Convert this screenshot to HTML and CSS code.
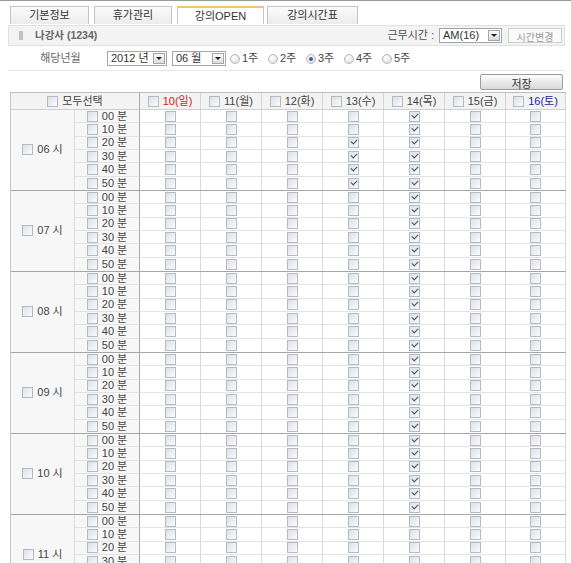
FILE: index.html
```html
<!DOCTYPE html>
<html lang="ko">
<head>
<meta charset="utf-8">
<title>강의OPEN</title>
<link rel="stylesheet" href="styles.css">
</head>
<body>
<div class="topline"></div>
<nav class="tabs">
  <a class="tab t1">기본정보</a>
  <a class="tab t2">휴가관리</a>
  <a class="tab t3 active">강의OPEN</a>
  <a class="tab t4">강의시간표</a>
</nav>
<div class="infobar">
  <span class="bar-icon"></span>
  <span class="name">나강사 (1234)</span>
  <span class="spacer"></span>
  <span class="worklabel">근무시간 :</span>
  <span class="sel sel-am"><span class="val">AM(16)</span><span class="arr"></span></span>
  <button class="btn-small">시간변경</button>
</div>
<div class="daterow">
  <span class="label">해당년월</span>
  <span class="sel sel-year"><span class="val">2012 년</span><span class="arr"></span></span>
  <span class="sel sel-month"><span class="val">06 월</span><span class="arr"></span></span>
  <span class="radios">
    <label class="radio"><i class="rd"></i>1주</label>
    <label class="radio"><i class="rd"></i>2주</label>
    <label class="radio"><i class="rd on"></i>3주</label>
    <label class="radio"><i class="rd"></i>4주</label>
    <label class="radio"><i class="rd"></i>5주</label>
  </span>
</div>
<div class="actions"><button class="btn-save">저장</button></div>

<div class="sched">
  <div class="head">
    <span class="hc all"><i class="cb"></i>모두선택</span>
    <span class="hc"><i class="cb"></i><b class="sun">10(일)</b></span>
    <span class="hc"><i class="cb"></i>11(월)</span>
    <span class="hc"><i class="cb"></i>12(화)</span>
    <span class="hc"><i class="cb"></i>13(수)</span>
    <span class="hc"><i class="cb"></i>14(목)</span>
    <span class="hc"><i class="cb"></i>15(금)</span>
    <span class="hc"><i class="cb"></i><b class="sat">16(토)</b></span>
  </div>

  <div class="hour">
    <span class="h"><i class="cb"></i>06 시</span>
    <span class="m"><i class="cb"></i>00 분</span><span class="d"><i class="cb"></i></span><span class="d"><i class="cb"></i></span><span class="d"><i class="cb"></i></span><span class="d"><i class="cb"></i></span><span class="d"><i class="cb on"></i></span><span class="d"><i class="cb"></i></span><span class="d"><i class="cb"></i></span>
    <span class="m"><i class="cb"></i>10 분</span><span class="d"><i class="cb"></i></span><span class="d"><i class="cb"></i></span><span class="d"><i class="cb"></i></span><span class="d"><i class="cb"></i></span><span class="d"><i class="cb on"></i></span><span class="d"><i class="cb"></i></span><span class="d"><i class="cb"></i></span>
    <span class="m"><i class="cb"></i>20 분</span><span class="d"><i class="cb"></i></span><span class="d"><i class="cb"></i></span><span class="d"><i class="cb"></i></span><span class="d"><i class="cb on"></i></span><span class="d"><i class="cb on"></i></span><span class="d"><i class="cb"></i></span><span class="d"><i class="cb"></i></span>
    <span class="m"><i class="cb"></i>30 분</span><span class="d"><i class="cb"></i></span><span class="d"><i class="cb"></i></span><span class="d"><i class="cb"></i></span><span class="d"><i class="cb on"></i></span><span class="d"><i class="cb on"></i></span><span class="d"><i class="cb"></i></span><span class="d"><i class="cb"></i></span>
    <span class="m"><i class="cb"></i>40 분</span><span class="d"><i class="cb"></i></span><span class="d"><i class="cb"></i></span><span class="d"><i class="cb"></i></span><span class="d"><i class="cb on"></i></span><span class="d"><i class="cb on"></i></span><span class="d"><i class="cb"></i></span><span class="d"><i class="cb"></i></span>
    <span class="m"><i class="cb"></i>50 분</span><span class="d"><i class="cb"></i></span><span class="d"><i class="cb"></i></span><span class="d"><i class="cb"></i></span><span class="d"><i class="cb on"></i></span><span class="d"><i class="cb on"></i></span><span class="d"><i class="cb"></i></span><span class="d"><i class="cb"></i></span>
  </div>

  <div class="hour">
    <span class="h"><i class="cb"></i>07 시</span>
    <span class="m"><i class="cb"></i>00 분</span><span class="d"><i class="cb"></i></span><span class="d"><i class="cb"></i></span><span class="d"><i class="cb"></i></span><span class="d"><i class="cb"></i></span><span class="d"><i class="cb on"></i></span><span class="d"><i class="cb"></i></span><span class="d"><i class="cb"></i></span>
    <span class="m"><i class="cb"></i>10 분</span><span class="d"><i class="cb"></i></span><span class="d"><i class="cb"></i></span><span class="d"><i class="cb"></i></span><span class="d"><i class="cb"></i></span><span class="d"><i class="cb on"></i></span><span class="d"><i class="cb"></i></span><span class="d"><i class="cb"></i></span>
    <span class="m"><i class="cb"></i>20 분</span><span class="d"><i class="cb"></i></span><span class="d"><i class="cb"></i></span><span class="d"><i class="cb"></i></span><span class="d"><i class="cb"></i></span><span class="d"><i class="cb on"></i></span><span class="d"><i class="cb"></i></span><span class="d"><i class="cb"></i></span>
    <span class="m"><i class="cb"></i>30 분</span><span class="d"><i class="cb"></i></span><span class="d"><i class="cb"></i></span><span class="d"><i class="cb"></i></span><span class="d"><i class="cb"></i></span><span class="d"><i class="cb on"></i></span><span class="d"><i class="cb"></i></span><span class="d"><i class="cb"></i></span>
    <span class="m"><i class="cb"></i>40 분</span><span class="d"><i class="cb"></i></span><span class="d"><i class="cb"></i></span><span class="d"><i class="cb"></i></span><span class="d"><i class="cb"></i></span><span class="d"><i class="cb on"></i></span><span class="d"><i class="cb"></i></span><span class="d"><i class="cb"></i></span>
    <span class="m"><i class="cb"></i>50 분</span><span class="d"><i class="cb"></i></span><span class="d"><i class="cb"></i></span><span class="d"><i class="cb"></i></span><span class="d"><i class="cb"></i></span><span class="d"><i class="cb on"></i></span><span class="d"><i class="cb"></i></span><span class="d"><i class="cb"></i></span>
  </div>

  <div class="hour">
    <span class="h"><i class="cb"></i>08 시</span>
    <span class="m"><i class="cb"></i>00 분</span><span class="d"><i class="cb"></i></span><span class="d"><i class="cb"></i></span><span class="d"><i class="cb"></i></span><span class="d"><i class="cb"></i></span><span class="d"><i class="cb on"></i></span><span class="d"><i class="cb"></i></span><span class="d"><i class="cb"></i></span>
    <span class="m"><i class="cb"></i>10 분</span><span class="d"><i class="cb"></i></span><span class="d"><i class="cb"></i></span><span class="d"><i class="cb"></i></span><span class="d"><i class="cb"></i></span><span class="d"><i class="cb on"></i></span><span class="d"><i class="cb"></i></span><span class="d"><i class="cb"></i></span>
    <span class="m"><i class="cb"></i>20 분</span><span class="d"><i class="cb"></i></span><span class="d"><i class="cb"></i></span><span class="d"><i class="cb"></i></span><span class="d"><i class="cb"></i></span><span class="d"><i class="cb on"></i></span><span class="d"><i class="cb"></i></span><span class="d"><i class="cb"></i></span>
    <span class="m"><i class="cb"></i>30 분</span><span class="d"><i class="cb"></i></span><span class="d"><i class="cb"></i></span><span class="d"><i class="cb"></i></span><span class="d"><i class="cb"></i></span><span class="d"><i class="cb on"></i></span><span class="d"><i class="cb"></i></span><span class="d"><i class="cb"></i></span>
    <span class="m"><i class="cb"></i>40 분</span><span class="d"><i class="cb"></i></span><span class="d"><i class="cb"></i></span><span class="d"><i class="cb"></i></span><span class="d"><i class="cb"></i></span><span class="d"><i class="cb on"></i></span><span class="d"><i class="cb"></i></span><span class="d"><i class="cb"></i></span>
    <span class="m"><i class="cb"></i>50 분</span><span class="d"><i class="cb"></i></span><span class="d"><i class="cb"></i></span><span class="d"><i class="cb"></i></span><span class="d"><i class="cb"></i></span><span class="d"><i class="cb on"></i></span><span class="d"><i class="cb"></i></span><span class="d"><i class="cb"></i></span>
  </div>

  <div class="hour">
    <span class="h"><i class="cb"></i>09 시</span>
    <span class="m"><i class="cb"></i>00 분</span><span class="d"><i class="cb"></i></span><span class="d"><i class="cb"></i></span><span class="d"><i class="cb"></i></span><span class="d"><i class="cb"></i></span><span class="d"><i class="cb on"></i></span><span class="d"><i class="cb"></i></span><span class="d"><i class="cb"></i></span>
    <span class="m"><i class="cb"></i>10 분</span><span class="d"><i class="cb"></i></span><span class="d"><i class="cb"></i></span><span class="d"><i class="cb"></i></span><span class="d"><i class="cb"></i></span><span class="d"><i class="cb on"></i></span><span class="d"><i class="cb"></i></span><span class="d"><i class="cb"></i></span>
    <span class="m"><i class="cb"></i>20 분</span><span class="d"><i class="cb"></i></span><span class="d"><i class="cb"></i></span><span class="d"><i class="cb"></i></span><span class="d"><i class="cb"></i></span><span class="d"><i class="cb on"></i></span><span class="d"><i class="cb"></i></span><span class="d"><i class="cb"></i></span>
    <span class="m"><i class="cb"></i>30 분</span><span class="d"><i class="cb"></i></span><span class="d"><i class="cb"></i></span><span class="d"><i class="cb"></i></span><span class="d"><i class="cb"></i></span><span class="d"><i class="cb on"></i></span><span class="d"><i class="cb"></i></span><span class="d"><i class="cb"></i></span>
    <span class="m"><i class="cb"></i>40 분</span><span class="d"><i class="cb"></i></span><span class="d"><i class="cb"></i></span><span class="d"><i class="cb"></i></span><span class="d"><i class="cb"></i></span><span class="d"><i class="cb on"></i></span><span class="d"><i class="cb"></i></span><span class="d"><i class="cb"></i></span>
    <span class="m"><i class="cb"></i>50 분</span><span class="d"><i class="cb"></i></span><span class="d"><i class="cb"></i></span><span class="d"><i class="cb"></i></span><span class="d"><i class="cb"></i></span><span class="d"><i class="cb on"></i></span><span class="d"><i class="cb"></i></span><span class="d"><i class="cb"></i></span>
  </div>

  <div class="hour">
    <span class="h"><i class="cb"></i>10 시</span>
    <span class="m"><i class="cb"></i>00 분</span><span class="d"><i class="cb"></i></span><span class="d"><i class="cb"></i></span><span class="d"><i class="cb"></i></span><span class="d"><i class="cb"></i></span><span class="d"><i class="cb on"></i></span><span class="d"><i class="cb"></i></span><span class="d"><i class="cb"></i></span>
    <span class="m"><i class="cb"></i>10 분</span><span class="d"><i class="cb"></i></span><span class="d"><i class="cb"></i></span><span class="d"><i class="cb"></i></span><span class="d"><i class="cb"></i></span><span class="d"><i class="cb on"></i></span><span class="d"><i class="cb"></i></span><span class="d"><i class="cb"></i></span>
    <span class="m"><i class="cb"></i>20 분</span><span class="d"><i class="cb"></i></span><span class="d"><i class="cb"></i></span><span class="d"><i class="cb"></i></span><span class="d"><i class="cb"></i></span><span class="d"><i class="cb on"></i></span><span class="d"><i class="cb"></i></span><span class="d"><i class="cb"></i></span>
    <span class="m"><i class="cb"></i>30 분</span><span class="d"><i class="cb"></i></span><span class="d"><i class="cb"></i></span><span class="d"><i class="cb"></i></span><span class="d"><i class="cb"></i></span><span class="d"><i class="cb on"></i></span><span class="d"><i class="cb"></i></span><span class="d"><i class="cb"></i></span>
    <span class="m"><i class="cb"></i>40 분</span><span class="d"><i class="cb"></i></span><span class="d"><i class="cb"></i></span><span class="d"><i class="cb"></i></span><span class="d"><i class="cb"></i></span><span class="d"><i class="cb on"></i></span><span class="d"><i class="cb"></i></span><span class="d"><i class="cb"></i></span>
    <span class="m"><i class="cb"></i>50 분</span><span class="d"><i class="cb"></i></span><span class="d"><i class="cb"></i></span><span class="d"><i class="cb"></i></span><span class="d"><i class="cb"></i></span><span class="d"><i class="cb on"></i></span><span class="d"><i class="cb"></i></span><span class="d"><i class="cb"></i></span>
  </div>

  <div class="hour">
    <span class="h"><i class="cb"></i>11 시</span>
    <span class="m"><i class="cb"></i>00 분</span><span class="d"><i class="cb"></i></span><span class="d"><i class="cb"></i></span><span class="d"><i class="cb"></i></span><span class="d"><i class="cb"></i></span><span class="d"><i class="cb"></i></span><span class="d"><i class="cb"></i></span><span class="d"><i class="cb"></i></span>
    <span class="m"><i class="cb"></i>10 분</span><span class="d"><i class="cb"></i></span><span class="d"><i class="cb"></i></span><span class="d"><i class="cb"></i></span><span class="d"><i class="cb"></i></span><span class="d"><i class="cb"></i></span><span class="d"><i class="cb"></i></span><span class="d"><i class="cb"></i></span>
    <span class="m"><i class="cb"></i>20 분</span><span class="d"><i class="cb"></i></span><span class="d"><i class="cb"></i></span><span class="d"><i class="cb"></i></span><span class="d"><i class="cb"></i></span><span class="d"><i class="cb"></i></span><span class="d"><i class="cb"></i></span><span class="d"><i class="cb"></i></span>
    <span class="m"><i class="cb"></i>30 분</span><span class="d"><i class="cb"></i></span><span class="d"><i class="cb"></i></span><span class="d"><i class="cb"></i></span><span class="d"><i class="cb"></i></span><span class="d"><i class="cb"></i></span><span class="d"><i class="cb"></i></span><span class="d"><i class="cb"></i></span>
    <span class="m"><i class="cb"></i>40 분</span><span class="d"><i class="cb"></i></span><span class="d"><i class="cb"></i></span><span class="d"><i class="cb"></i></span><span class="d"><i class="cb"></i></span><span class="d"><i class="cb"></i></span><span class="d"><i class="cb"></i></span><span class="d"><i class="cb"></i></span>
    <span class="m"><i class="cb"></i>50 분</span><span class="d"><i class="cb"></i></span><span class="d"><i class="cb"></i></span><span class="d"><i class="cb"></i></span><span class="d"><i class="cb"></i></span><span class="d"><i class="cb"></i></span><span class="d"><i class="cb"></i></span><span class="d"><i class="cb"></i></span>
  </div>
</div>
</body>
</html>
```

FILE: styles.css
```css
html { overflow: hidden; }
body {
  margin: 0;
  background: #fff;
  color: #444;
  font-family: "Liberation Sans", "Noto Sans CJK KR", sans-serif;
  font-size: 11px;
  line-height: 1;
}
* { box-sizing: border-box; }

.topline { height: 1px; background: #9a9a9a; }

/* tabs */
.tabs {
  display: flex;
  gap: 4px;
  margin: 5px 0 0 10px;
  height: 18px;
}
.tab {
  display: flex;
  align-items: center;
  justify-content: center;
  height: 18px;
  border: 1px solid #c4c4c4;
  border-bottom: 0;
  background: linear-gradient(#fbfbfb, #ebebeb);
  color: #333;
  font-size: 11px;
}
.t1 { width: 79px; }
.t2 { width: 78px; margin-left: 1px; }
.t3 { width: 87px; margin-left: 1px; }
.t4 { width: 91px; margin-left: -1px; }
.tab.active {
  background: #fff;
  border-top: 2px solid #f2c46b;
  border-color: #f2c46b #c8c8c8 #c8c8c8;
}

/* info bar */
.infobar {
  display: flex;
  align-items: center;
  height: 21px;
  margin: 1px 6px 0 8px;
  background: #f3f3f3;
  border: 1px solid #e1e1e1;
  padding: 0 2px 0 10px;
}
.bar-icon {
  width: 4px;
  height: 9px;
  background: #c2c2c2;
}
.name {
  margin-left: 12px;
  color: #666;
  font-weight: bold;
  font-size: 10.5px;
}
.spacer { flex: 1; }
.worklabel { color: #555; margin-right: 5px; }

.sel {
  display: inline-flex;
  align-items: center;
  height: 15px;
  border: 1px solid #9aa8b8;
  background: #fff;
  padding: 0 1px 0 3px;
  color: #333;
  font-size: 11px;
}
.sel .val { flex: 1; }
.arr {
  position: relative;
  width: 12px;
  height: 11px;
  border: 1px solid #a6a6a6;
  background: linear-gradient(#fafafa, #dcdcdc);
}
.arr::after {
  content: "";
  position: absolute;
  left: 2px;
  top: 3px;
  border-left: 3px solid transparent;
  border-right: 3px solid transparent;
  border-top: 3px solid #222;
}
.sel-am { width: 63px; }
.btn-small {
  margin-left: 6px;
  height: 15px;
  width: 54px;
  padding: 0;
  border: 1px solid #cfcfcf;
  background: #fafafa;
  color: #999;
  font-family: inherit;
  font-size: 10px;
}

/* date row */
.daterow {
  display: flex;
  align-items: center;
  height: 24px;
  margin: 1px 6px 0 8px;
  border-bottom: 1px solid #e4e4e4;
}
.label {
  width: 93px;
  text-align: center;
  color: #666;
  margin-left: 6px;
}
.sel-year { width: 60px; }
.sel-month { width: 54px; margin-left: 5px; }
.radios { display: flex; margin-left: 4px; }
.radio {
  display: flex;
  align-items: center;
  width: 38px;
  color: #444;
}
.rd {
  width: 10px;
  height: 10px;
  margin-right: 2px;
  border-radius: 50%;
  border: 1px solid #b8b8b8;
  background: radial-gradient(circle at 40% 35%, #fff, #d8d8d8);
  position: relative;
}
.rd.on::after {
  content: "";
  position: absolute;
  left: 2px;
  top: 2px;
  width: 4px;
  height: 4px;
  border-radius: 50%;
  background: #3a5f95;
}

/* save */
.actions {
  display: flex;
  justify-content: flex-end;
  margin: 3px 8px 0 0;
}
.btn-save {
  width: 83px;
  height: 16px;
  padding: 0;
  border: 1px solid #9c9c9c;
  border-radius: 2px;
  background: linear-gradient(#fdfdfd, #d9d9d9);
  color: #333;
  font-family: inherit;
  font-size: 11px;
}

/* schedule grid */
.sched {
  margin: 2px 0 0 10px;
  width: 556px;
  border-top: 1px solid #bdbdbd;
  border-left: 1px solid #c6c6c6;
}
.head {
  display: grid;
  grid-template-columns: 129px repeat(6, 61px) 60px;
  height: 17px;
}
.hc {
  display: flex;
  align-items: center;
  justify-content: center;
  background: #f3f3f3;
  border-right: 1px solid #d4d4d4;
  border-bottom: 1px solid #cfcfcf;
  color: #444;
}
.hc.all { border-right-color: #a9a9a9; }
.hc b { font-weight: normal; }
.sun { color: #e3140f; }
.sat { color: #1f22a8; }

.hour {
  display: grid;
  grid-template-columns: 64px 65px repeat(6, 61px) 60px;
  grid-template-rows: repeat(6, 1fr);
  height: 81px;
  border-bottom: 1px solid #a6a6a6;
}
.hour > span {
  display: flex;
  align-items: center;
  justify-content: center;
  border-right: 1px solid #dadada;
  border-bottom: 1px solid #e3e3e3;
}
.hour > :nth-child(n+42) { border-bottom: 0; }
.hour > .h {
  grid-row: 1 / span 6;
  background: #f7f7f7;
  border-bottom: 0;
  border-right-color: #dcdcdc;
}
.hour > .m {
  background: #f7f7f7;
  border-right-color: #a9a9a9;
}

.cb {
  display: inline-block;
  position: relative;
  width: 11px;
  height: 11px;
  border: 1px solid #b4bac4;
  background: linear-gradient(135deg, #dde0e6, #fafbfc);
  flex: none;
}
.h .cb, .m .cb, .hc .cb { margin-right: 4px; }
.cb.on::after {
  content: "";
  position: absolute;
  left: 2px;
  top: 1px;
  width: 5px;
  height: 3px;
  border-left: 1.5px solid #3d4f6e;
  border-bottom: 1.5px solid #3d4f6e;
  transform: rotate(-45deg);
}
```
